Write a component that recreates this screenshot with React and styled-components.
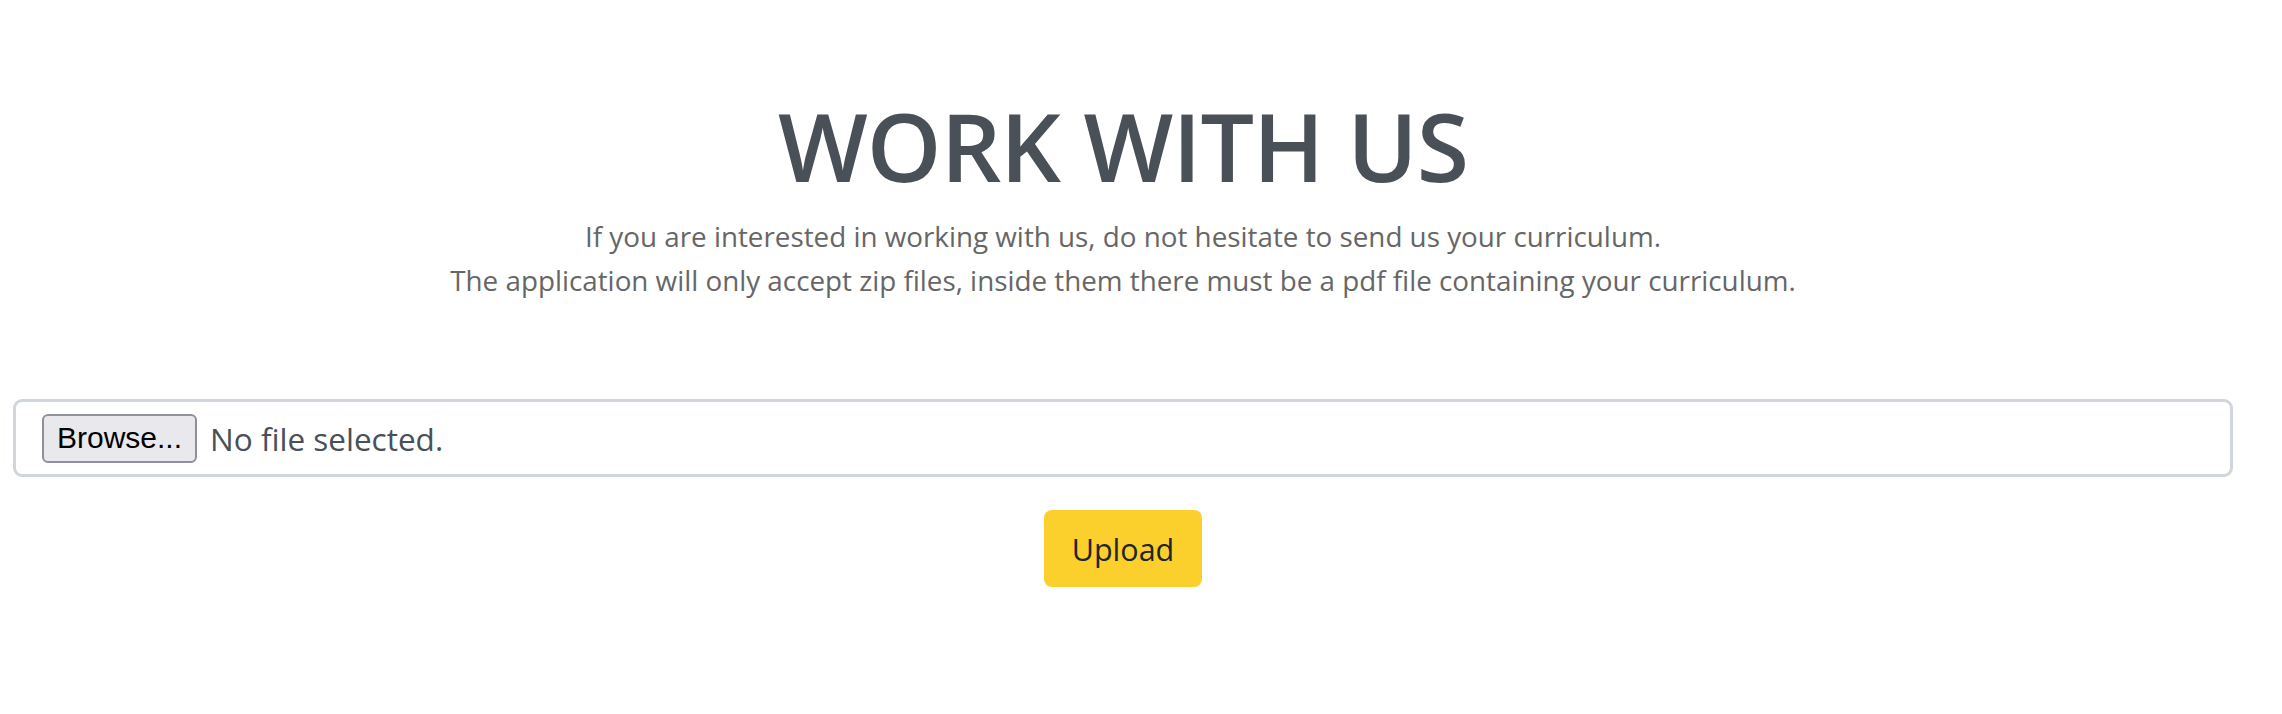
import styled, { createGlobalStyle } from 'styled-components'

const GlobalStyle = createGlobalStyle`
  html, body {
    margin: 0;
    padding: 0;
    background: #fff;
  }
  body {
    font-family: 'Open Sans', 'Noto Sans', sans-serif;
  }
`

const Page = styled.main`
  box-sizing: border-box;
  width: 100%;
  padding: 88px 49px 0 13px;
  display: flex;
  flex-direction: column;
  align-items: center;
`

const Title = styled.h1`
  margin: 0;
  font-size: 95px;
  line-height: 114px;
  font-weight: 600;
  color: #4a5058;
  letter-spacing: -1px;
`

const Intro = styled.p`
  margin: 12px 0 0 0;
  font-size: 27.8px;
  line-height: 44px;
  color: #666666;
  text-align: center;
`

const UploadForm = styled.form`
  width: 100%;
  margin-top: 97px;
  display: flex;
  flex-direction: column;
  align-items: center;
  gap: 33px;
`

const FileField = styled.label`
  box-sizing: border-box;
  width: 100%;
  height: 78px;
  display: flex;
  align-items: center;
  gap: 13px;
  padding: 0 26px;
  border: 3px solid #d1d5dc;
  border-radius: 9px;
  cursor: pointer;
`

const BrowseButton = styled.span`
  box-sizing: border-box;
  display: inline-flex;
  align-items: center;
  justify-content: center;
  height: 49px;
  padding: 0 13px;
  background: #e9e9ed;
  border: 2px solid #8f8f9d;
  border-radius: 6px;
  font-family: 'Liberation Sans', Arial, sans-serif;
  font-size: 30px;
  color: #000;
`

const FileName = styled.span`
  font-size: 31.5px;
  color: #495057;
`

const HiddenInput = styled.input`
  display: none;
`

const UploadButton = styled.button`
  box-sizing: border-box;
  height: 77px;
  padding: 0 28px;
  background: #fbd02d;
  border: 0;
  border-radius: 8px;
  font-family: inherit;
  font-size: 30.5px;
  color: #212529;
  cursor: pointer;
`

export default function App() {
  return (
    <>
      <GlobalStyle />
      <Page>
        <Title>WORK WITH US</Title>
        <Intro>
          If you are interested in working with us, do not hesitate to send us your curriculum.
          <br />
          The application will only accept zip files, inside them there must be a pdf file containing your curriculum.
        </Intro>
        <UploadForm onSubmit={(e) => e.preventDefault()}>
          <FileField>
            <HiddenInput type="file" accept=".zip" />
            <BrowseButton>Browse...</BrowseButton>
            <FileName>No file selected.</FileName>
          </FileField>
          <UploadButton type="submit">Upload</UploadButton>
        </UploadForm>
      </Page>
    </>
  )
}
